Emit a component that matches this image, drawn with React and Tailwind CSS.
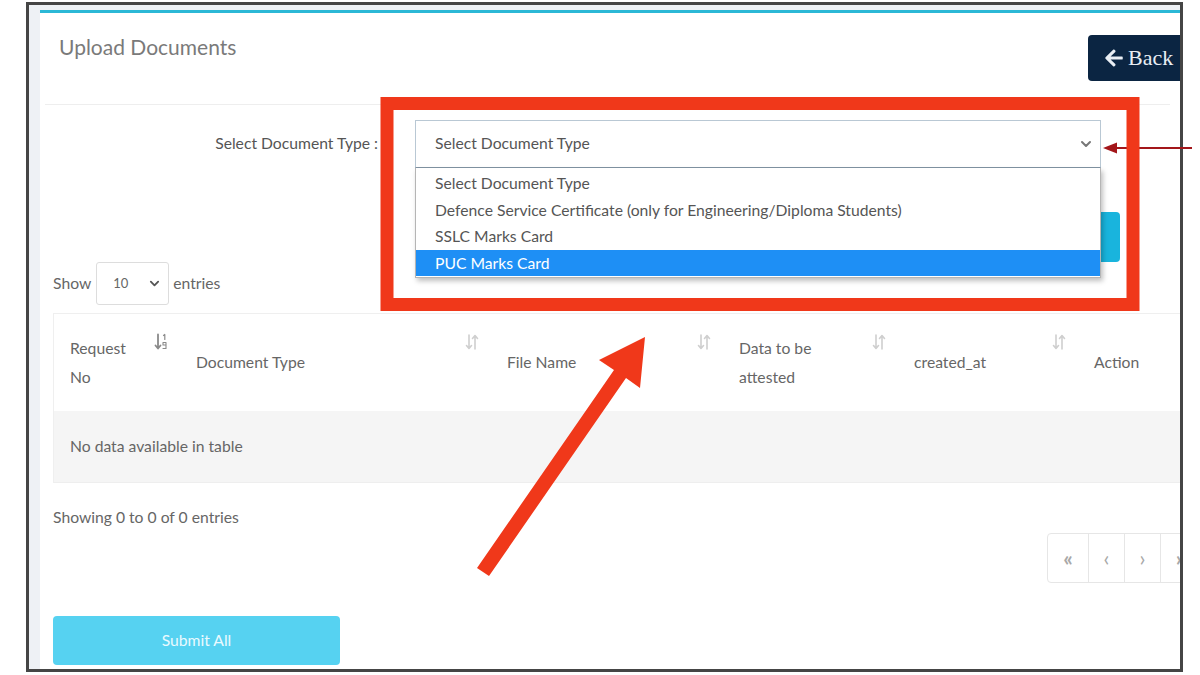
import React from "react";
import { FaArrowLeft } from "react-icons/fa";

const SortIcon = () => (
  <svg width="14" height="18" viewBox="0 0 14 18">
    <g stroke="#cfcfcf" strokeWidth="1.6" fill="none" strokeLinecap="round" strokeLinejoin="round">
      <path d="M4 2v13M1.5 12.5L4 15.5L6.5 12.5" />
      <path d="M10 16V3M7.5 5.5L10 2.5L12.5 5.5" />
    </g>
  </svg>
);

const SortActive = () => (
  <svg width="14" height="18" viewBox="0 0 14 18">
    <g stroke="#8a8a8a" fill="none" strokeLinecap="round" strokeLinejoin="round">
      <path d="M4 1.5v13.5M1.5 12.5L4 15.5L6.5 12.5" strokeWidth="1.8" />
      <path d="M9.5 2.5l1.3-1v5" strokeWidth="1.2" />
      <path d="M9 9.5h3v2.5h-3zM12 12v3.5h-3" strokeWidth="1.1" />
    </g>
  </svg>
);

const Chevron = ({ size = 12, color = "#666" }) => (
  <svg width={size} height={size} viewBox="0 0 12 12">
    <path d="M2 4l4 4 4-4" stroke={color} strokeWidth="2" fill="none" strokeLinecap="round" strokeLinejoin="round" />
  </svg>
);

const HeadCell = ({ children, active, last }) => (
  <div className="relative flex items-center pl-[16px] h-[97px] leading-[29px]">
    <div>{children}</div>
    {!last && (
      <div className="absolute top-[19px] right-[12px]">{active ? <SortActive /> : <SortIcon />}</div>
    )}
  </div>
);

export default function App() {
  const options = [
    "Select Document Type",
    "Defence Service Certificate (only for Engineering/Diploma Students)",
    "SSLC Marks Card",
    "PUC Marks Card",
  ];
  return (
    <div
      className="relative w-[1200px] h-[675px] bg-white overflow-hidden text-[#666]"
      style={{ fontFamily: "Lato, 'Open Sans', sans-serif" }}
    >
      <div className="ml-[26px] mt-[2px] w-[1157px] h-[670px] border-[3px] border-[#454545] bg-[#eef1f5] overflow-hidden pl-[11px] pt-[5px]">
        <div className="w-[1150px] h-[700px] bg-white border-t-[3px] border-[#2bb8d6]">
          {/* Header */}
          <div className="flex h-[91px]">
            <div className="pl-[19px] pt-[19px] text-[21px] leading-[30px] text-[#7a7a7a]">Upload Documents</div>
            <div className="ml-auto mt-[22px] h-[46px] w-[102px] rounded-l-[4px] bg-[#0b2542] flex items-center pl-[16px] gap-[4px] text-[#e9eef4]">
              <FaArrowLeft className="w-[20px] h-[20px]" />
              <span className="text-[22px] leading-none" style={{ fontFamily: "'Liberation Serif', serif" }}>Back</span>
            </div>
          </div>
          <div className="h-px bg-[#eeeeee] ml-[5px] mr-[20px]" />

          {/* Form row */}
          <div className="mt-[15px] flex items-center">
            <div className="w-[338px] text-right text-[15.7px] text-[#555]">Select Document Type :</div>
            <div className="relative ml-[37px] w-[686px] h-[48px]">
              <div className="w-full h-full border border-[#b9c8d4] border-b-[#8193a3] flex items-center pl-[19px] pr-[8px] text-[15.7px] text-[#555]">
                <span>Select Document Type</span>
                <span className="ml-auto"><Chevron size={12} color="#777" /></span>
              </div>
              <div className="absolute left-0 top-full w-full bg-white border border-[#b5b5b5] border-t-0 shadow-[2px_3px_5px_rgba(0,0,0,0.25)] pt-[2px] pb-[1px] z-10">
                {options.map((o, i) => (
                  <div
                    key={o}
                    className={`h-[26.5px] leading-[26.5px] pl-[19px] text-[15.7px] ${i === 3 ? "bg-[#1e8ff5] text-white" : "text-[#555]"}`}
                  >
                    {o}
                  </div>
                ))}
              </div>
            </div>
          </div>

          {/* Hidden upload button */}
          <div className="mt-[44px] ml-[1000px] w-[80px] h-[50px] rounded-[4px] bg-[#19b4dd]" />

          {/* Show entries */}
          <div className="ml-[13px] h-[43px] flex items-center text-[15.7px]">
            <span>Show</span>
            <div className="ml-[5px] w-[73px] h-[43px] border border-[#dddddd] rounded-[3px] flex items-center pl-[16px] pr-[8px] text-[13px] text-[#666]">
              <span>10</span>
              <span className="ml-auto"><Chevron size={11} color="#555" /></span>
            </div>
            <span className="ml-[4px]">entries</span>
          </div>

          {/* Table */}
          <div className="mt-[8px] ml-[13px] border-t border-l border-[#efefef] text-[15.7px]">
            <div className="grid grid-cols-[126px_311px_232px_175px_180px_1fr]">
              <HeadCell active>Request<br />No</HeadCell>
              <HeadCell>Document Type</HeadCell>
              <HeadCell>File Name</HeadCell>
              <HeadCell>Data to be<br />attested</HeadCell>
              <HeadCell>created_at</HeadCell>
              <HeadCell last>Action</HeadCell>
            </div>
            <div className="h-[72px] bg-[#f5f5f5] flex items-center pl-[16px] border-b border-[#eeeeee]">
              No data available in table
            </div>
          </div>

          <div className="mt-[22px] ml-[13px] text-[15.7px] leading-[24px]">Showing 0 to 0 of 0 entries</div>

          {/* Pagination */}
          <div className="mt-[4px] ml-[1007px] flex h-[50px] w-fit border border-[#e6e6e6] rounded-[4px] text-[#a8a8a8] text-[21px]">
            <div className="w-[40px] flex items-center justify-center font-bold">«</div>
            <div className="w-[36px] flex items-center justify-center border-l border-[#e6e6e6]">‹</div>
            <div className="w-[36px] flex items-center justify-center border-l border-[#e6e6e6]">›</div>
            <div className="w-[40px] flex items-center justify-center border-l border-[#e6e6e6] font-bold">»</div>
          </div>

          {/* Submit */}
          <div className="mt-[33px] ml-[13px] w-[287px] h-[49px] rounded-[4px] bg-[#56d2f1] flex items-center justify-center text-[15.7px] text-[#eafaff]">
            Submit All
          </div>
        </div>
      </div>

      {/* Annotations */}
      <svg className="absolute left-0 top-0 pointer-events-none" width="1200" height="675" viewBox="0 0 1200 675">
        <line x1="1112" y1="148" x2="1192" y2="148" stroke="#a3161a" strokeWidth="2" />
        <polygon points="1103,148 1117,142.5 1117,153.5" fill="#a3161a" />
        <rect x="387" y="103.5" width="746" height="201" fill="none" stroke="#f0381a" strokeWidth="13" />
        <polygon points="477,568 489,576 626,378 640,388 645,337 599,360 614,370" fill="#f0381a" />
      </svg>
    </div>
  );
}
